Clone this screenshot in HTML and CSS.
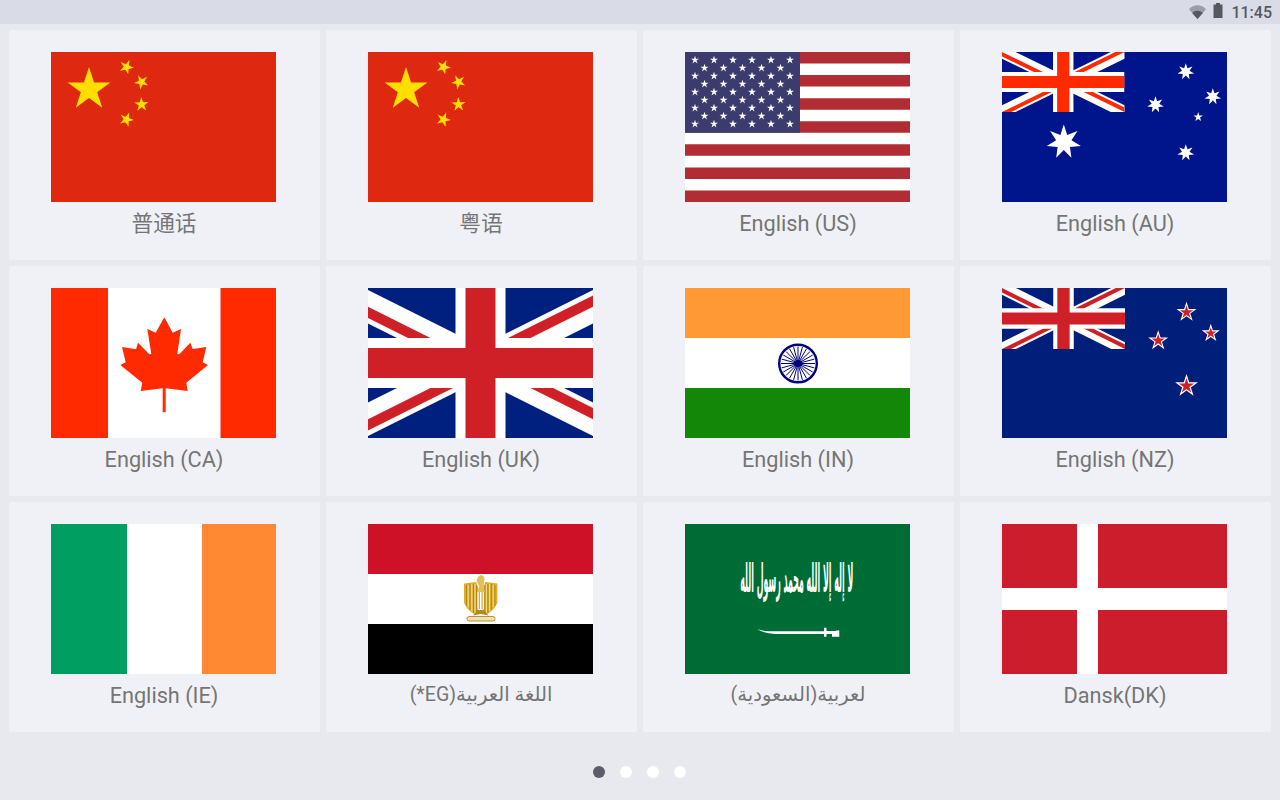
FILE: index.html
```html
<!DOCTYPE html>
<html lang="zh">
<head>
  <meta charset="UTF-8" />
  <title>Language</title>
  <link rel="stylesheet" href="styles.css">
</head>
<body>
  <!-- shared flag parts -->
  <svg class="defs" width="0" height="0" aria-hidden="true">
    <defs>
      <polygon id="star5" points="0,-1 .225,-.309 .951,-.309 .363,.118 .588,.809 0,.382 -.588,.809 -.363,.118 -.951,-.309 -.225,-.309" />
      <polygon id="star7" points="0,-1 .195,-.405 .782,-.623 .439,-.1 .975,.223 .352,.281 .434,.901 0,.45 -.434,.901 -.352,.281 -.975,.223 -.439,-.1 -.782,-.623 -.195,-.405" />
      <clipPath id="jackClip"><path d="M30,15h30v15zv15h-30zh-30v-15zv-15h30z" /></clipPath>
      <symbol id="jack" viewBox="0 0 60 30" preserveAspectRatio="none">
        <rect class="jack-blue" width="60" height="30" />
        <path d="M0,0L60,30M60,0L0,30" stroke="#fff" stroke-width="6" />
        <path class="jack-red-line" d="M0,0L60,30M60,0L0,30" stroke-width="4" clip-path="url(#jackClip)" />
        <path d="M30,0v30M0,15h60" stroke="#fff" stroke-width="10" />
        <path class="jack-red-line" d="M30,0v30M0,15h60" stroke-width="6" />
      </symbol>
      <pattern id="usStars" patternUnits="userSpaceOnUse" x="5" y="4" width="19" height="16">
        <use href="#star5" transform="translate(5 4) scale(4.2)" fill="#fff" />
        <use href="#star5" transform="translate(14.5 12) scale(4.2)" fill="#fff" />
      </pattern>
    </defs>
  </svg>

  <div class="status-bar">
    <svg class="wifi" width="17" height="14" viewBox="0 0 17 14">
      <path d="M0,4.2C4.6,-1.2 12.4,-1.2 17,4.2L8.5,14z" fill="#9a9ea6" />
      <path d="M3.2,7.9C6.2,5 10.8,5 13.8,7.9L8.5,14z" fill="#55595f" />
    </svg>
    <svg class="battery" width="10" height="15" viewBox="0 0 10 15">
      <path d="M3,0h4v1.500h2.500v13.500h-9v-13.500h2.500z" fill="#55595f" />
    </svg>
    <span class="clock">11:45</span>
  </div>

  <div class="page">
    <div class="grid">
      <div class="card">
        <svg class="flag" viewBox="0 0 225 150">
          <rect width="225" height="150" fill="#de2910" />
          <g fill="#ffde00">
            <use href="#star5" transform="translate(38 37.500) scale(22.500)" />
            <use href="#star5" transform="translate(75.500 15) scale(7.500) rotate(-121)" />
            <use href="#star5" transform="translate(90.500 30) scale(7.500) rotate(-98)" />
            <use href="#star5" transform="translate(90.500 52.500) scale(7.500) rotate(-74)" />
            <use href="#star5" transform="translate(75.500 67.500) scale(7.500) rotate(-51)" />
          </g>
        </svg>
        <div class="label">普通话</div>
      </div>

      <div class="card">
        <svg class="flag" viewBox="0 0 225 150">
          <rect width="225" height="150" fill="#de2910" />
          <g fill="#ffde00">
            <use href="#star5" transform="translate(38 37.500) scale(22.500)" />
            <use href="#star5" transform="translate(75.500 15) scale(7.500) rotate(-121)" />
            <use href="#star5" transform="translate(90.500 30) scale(7.500) rotate(-98)" />
            <use href="#star5" transform="translate(90.500 52.500) scale(7.500) rotate(-74)" />
            <use href="#star5" transform="translate(75.500 67.500) scale(7.500) rotate(-51)" />
          </g>
        </svg>
        <div class="label">粤语</div>
      </div>

      <div class="card">
        <svg class="flag" viewBox="0 0 225 150">
          <rect width="225" height="150" fill="#fff" />
          <path d="M0,5.770H225M0,28.850H225M0,51.920H225M0,75H225M0,98.080H225M0,121.150H225M0,144.230H225" stroke="#b22c33" stroke-width="11.540" />
          <rect width="115" height="80.800" fill="#3c3b6e" />
          <rect x="5" y="4" width="105" height="72" fill="url(#usStars)" />
        </svg>
        <div class="label">English (US)</div>
      </div>

      <div class="card">
        <svg class="flag flag-au" viewBox="0 0 225 150">
          <rect width="225" height="150" fill="#00148c" />
          <use href="#jack" width="122.500" height="60" />
          <g fill="#fff">
            <use href="#star7" transform="translate(61.800 90) scale(17.500)" />
            <use href="#star7" transform="translate(183.800 19.700) scale(8.500)" />
            <use href="#star7" transform="translate(210.800 44.700) scale(8.500)" />
            <use href="#star7" transform="translate(153.500 52.700) scale(8.500)" />
            <use href="#star7" transform="translate(183.800 100.700) scale(8.500)" />
            <use href="#star5" transform="translate(196.200 65) scale(5)" />
          </g>
        </svg>
        <div class="label">English (AU)</div>
      </div>

      <div class="card">
        <svg class="flag" viewBox="0 0 225 150">
          <rect width="225" height="150" fill="#fff" />
          <rect width="57" height="150" fill="#ff2a00" />
          <rect x="169.500" width="55.500" height="150" fill="#ff2a00" />
          <polygon fill="#ff2a00" points="113.300,29.300 121.700,44.700 130,41 126.300,66 128.300,66.300 139.300,54.700 141.700,61 155.300,59 151.700,74.300 157,77 135.300,94.700 136.700,103 114.700,100.300 114.700,124.300 111.700,124.300 111.700,100.300 89.700,103 91.300,94.700 69.300,77 74.700,74.300 71,59 85,61.300 87,54.700 98.300,66.300 100.300,66 96.300,41 104.700,44.700" />
        </svg>
        <div class="label">English (CA)</div>
      </div>

      <div class="card">
        <svg class="flag flag-uk" viewBox="0 0 225 150">
          <use href="#jack" x="-37.500" width="300" height="150" />
        </svg>
        <div class="label">English (UK)</div>
      </div>

      <div class="card">
        <svg class="flag" viewBox="0 0 225 150">
          <rect width="225" height="50" fill="#ff9933" />
          <rect y="50" width="225" height="50" fill="#fff" />
          <rect y="100" width="225" height="50" fill="#138808" />
          <g transform="translate(113 75.500)" fill="none" stroke="#000080">
            <circle r="18.800" stroke-width="2.400" />
            <path stroke-width="1" d="M0,-17V17M-17,0H17M-4.400,-16.400L4.400,16.400M4.400,-16.400L-4.400,16.400M-8.500,-14.700L8.500,14.700M8.500,-14.700L-8.500,14.700M-12,-12L12,12M12,-12L-12,12M-14.700,-8.500L14.700,8.500M14.700,-8.500L-14.700,8.500M-16.400,-4.400L16.400,4.400M16.400,-4.400L-16.400,4.400" />
            <circle r="3.500" fill="#000080" stroke="none" />
          </g>
        </svg>
        <div class="label">English (IN)</div>
      </div>

      <div class="card">
        <svg class="flag flag-nz" viewBox="0 0 225 150">
          <rect width="225" height="150" fill="#001f7a" />
          <use href="#jack" width="123" height="61" />
          <use href="#star5" transform="translate(184.500 24.300) scale(10.500)" fill="#fff" />
          <use href="#star5" transform="translate(184.500 24.300) scale(7)" fill="#cf2027" />
          <use href="#star5" transform="translate(208.800 45.300) scale(9.500)" fill="#fff" />
          <use href="#star5" transform="translate(208.800 45.300) scale(6)" fill="#cf2027" />
          <use href="#star5" transform="translate(156.200 52.700) scale(10.500)" fill="#fff" />
          <use href="#star5" transform="translate(156.200 52.700) scale(7)" fill="#cf2027" />
          <use href="#star5" transform="translate(184.500 98) scale(12)" fill="#fff" />
          <use href="#star5" transform="translate(184.500 98) scale(8)" fill="#cf2027" />
        </svg>
        <div class="label">English (NZ)</div>
      </div>

      <div class="card">
        <svg class="flag" viewBox="0 0 225 150">
          <rect width="225" height="150" fill="#fff" />
          <rect width="76" height="150" fill="#009e60" />
          <rect x="151" width="74" height="150" fill="#ff8833" />
        </svg>
        <div class="label">English (IE)</div>
      </div>

      <div class="card">
        <svg class="flag" viewBox="0 0 225 150">
          <rect width="225" height="50" fill="#ce1126" />
          <rect y="50" width="225" height="50" fill="#fff" />
          <rect y="100" width="225" height="50" fill="#000" />
          <!-- eagle -->
          <path d="M96,59.500L108,58L110,63V88L108,91L103,88L99,84L96,79z" fill="#dcae2c" />
          <path d="M129.400,59.500L117.400,58L115.400,63V88L117.400,91L122.400,88L126.400,84L129.400,79z" fill="#dcae2c" />
          <path d="M98.500,61V82M102,60V86M105.500,60V89M108.500,61V89M126.900,61V82M123.400,60V86M119.900,60V89M116.900,61V89" stroke="#a67c10" stroke-width=".8" fill="none" />
          <path d="M100.200,61V83M103.800,60V87M107,60V89M125.200,61V83M121.600,60V87M118.400,60V89" stroke="#fff2c4" stroke-width=".7" fill="none" />
          <path d="M110,53C112,50 116,51 116.500,54L115.500,64L117,68H109.500L111,62L108.500,57z" fill="#e2c052" />
          <path d="M109.500,68H116V84L112.700,88L109.500,84z" fill="#fff" />
          <path d="M111.300,68V85M114.100,68V85" stroke="#c9a227" stroke-width="1.100" />
          <path d="M109.500,86L105,91.500L112.700,90L120.500,91.500L116,86z" fill="#b08a1c" />
          <rect x="99" y="92.500" width="28" height="4.500" rx="2" fill="#f0e2ae" stroke="#a67c10" stroke-width=".8" />
        </svg>
        <div class="label label-ar" dir="rtl">اللغة العربية(EG*)</div>
      </div>

      <div class="card">
        <svg class="flag" viewBox="0 0 225 150">
          <rect width="225" height="150" fill="#006c35" />
          <text class="shahada" transform="translate(168.300 68) scale(.197 1)" text-anchor="end">لا إله إلا الله محمد رسول الله</text>
          <path d="M72.300,105.300C78,107 84,107.300 90,107.300H139V103.700H141.500V107H151V106.500H154.300V112.700H147V110H141.500V112.700H139V110H92C84,110 77,108 72.300,105.300z" fill="#fff" />
        </svg>
        <div class="label label-ar" dir="rtl">لعربية(السعودية)</div>
      </div>

      <div class="card">
        <svg class="flag" viewBox="0 0 225 150">
          <rect width="225" height="150" fill="#cb1d2c" />
          <rect x="75" width="21" height="150" fill="#fff" />
          <rect y="64" width="225" height="22" fill="#fff" />
        </svg>
        <div class="label">Dansk(DK)</div>
      </div>
    </div>

    <div class="dots">
      <span class="dot active"></span>
      <span class="dot"></span>
      <span class="dot"></span>
      <span class="dot"></span>
    </div>
  </div>
</body>
</html>
```

FILE: styles.css
```css
* {
  margin: 0;
  padding: 0;
  box-sizing: border-box;
}
body {
  height: 800px;
  overflow: hidden;
  background-color: #e8e9ee;
  font-family: Roboto, "Noto Sans CJK SC", "DejaVu Sans", sans-serif;
}
.defs {
  position: absolute;
}
.status-bar {
  height: 24px;
  display: flex;
  justify-content: flex-end;
  align-items: center;
  padding-right: 8px;
  background-color: #d9dce6;
}
.wifi {
  margin-right: 7px;
  margin-top: -1px;
}
.battery {
  margin-right: 8px;
  margin-top: -4px;
}
.clock {
  font-size: 16px;
  font-weight: 500;
  color: #55595f;
}
.page {
  padding: 6px 9px 0;
}
.grid {
  display: grid;
  grid-template-columns: repeat(4, 311px);
  grid-auto-rows: 230px;
  gap: 6px;
}
.card {
  display: flex;
  flex-direction: column;
  align-items: center;
  padding: 22px 2px 0 0;
  background-color: #f0f1f6;
  border-radius: 2px;
}
.flag {
  display: block;
  width: 225px;
  height: 150px;
}
.label {
  margin-top: 7px;
  margin-left: 1px;
  font-size: 21.7px;
  line-height: 29px;
  color: #757575;
}
.label-ar {
  margin-top: 6px;
  font-size: 19.6px;
}
.shahada {
  font-family: "DejaVu Sans", sans-serif;
  font-size: 40px;
  font-weight: bold;
  fill: #fff;
}
.jack-blue {
  fill: var(--jack-blue, #00207f);
}
.jack-red-line {
  stroke: var(--jack-red, #cf2027);
  fill: none;
}
.flag-au {
  --jack-blue: #00148c;
  --jack-red: #ff2a00;
}
.flag-nz {
  --jack-blue: #001f7a;
}
.dots {
  display: flex;
  justify-content: center;
  gap: 15px;
  margin-top: 34px;
  padding-right: 1px;
}
.dot {
  width: 12px;
  height: 12px;
  border-radius: 50%;
  background-color: #fff;
}
.dot.active {
  background-color: #5c5d66;
}
```
